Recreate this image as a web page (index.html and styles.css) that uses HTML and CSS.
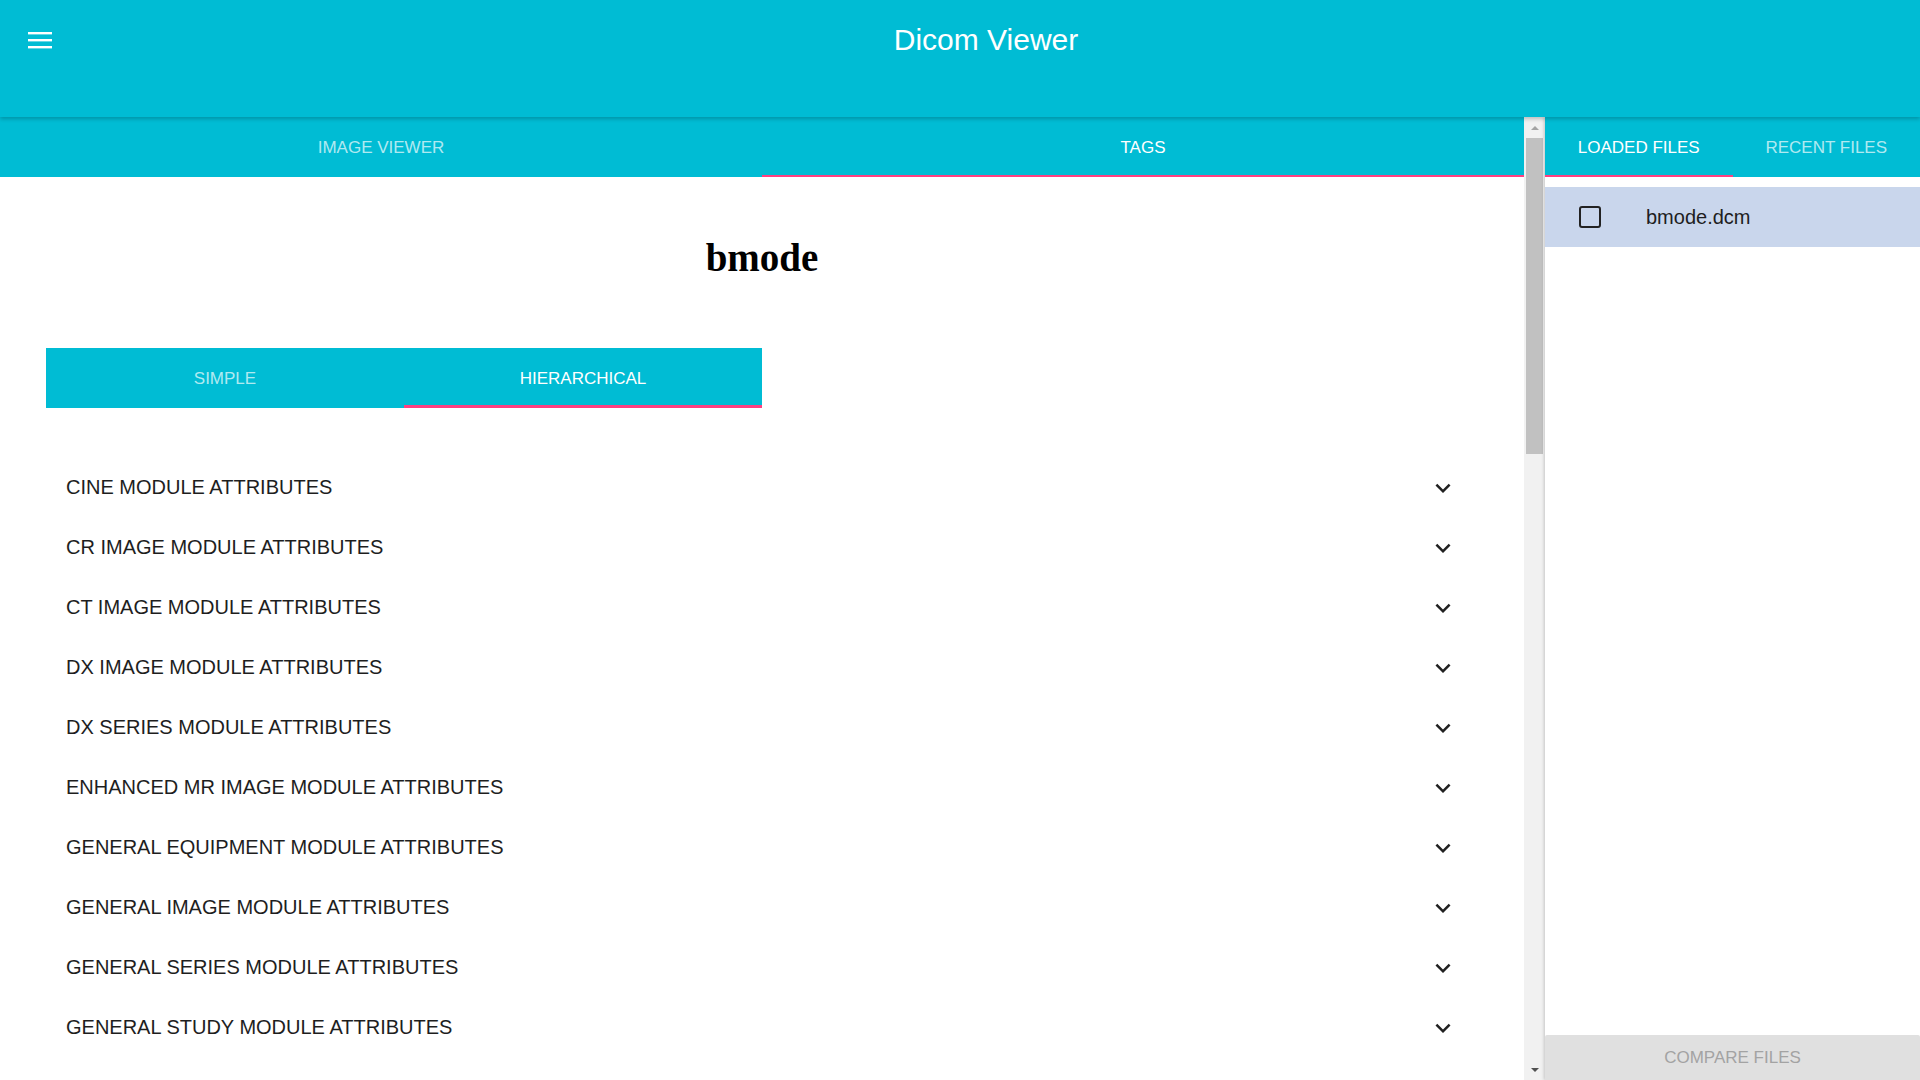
FILE: index.html
```html
<!DOCTYPE html>
<html lang="en">
<head>
<meta charset="utf-8">
<title>Dicom Viewer</title>
<link rel="stylesheet" href="styles.css">
</head>
<body>
<header class="appbar">
  <div class="toolbar">
    <button class="menu-btn" aria-label="menu">
      <svg width="24" height="17" viewBox="0 0 24 17"><rect x="0" y="0" width="24" height="2.4" fill="#fff"/><rect x="0" y="7" width="24" height="2.4" fill="#fff"/><rect x="0" y="14" width="24" height="2.4" fill="#fff"/></svg>
    </button>
    <h1 class="app-title">Dicom Viewer</h1>
  </div>
</header>

<div class="layout">
  <main class="main">
    <nav class="tabs">
      <div class="tab">IMAGE VIEWER</div>
      <div class="tab active">TAGS</div>
    </nav>
    <h2 class="file-title">bmode</h2>
    <nav class="subtabs">
      <div class="tab">SIMPLE</div>
      <div class="tab active">HIERARCHICAL</div>
    </nav>
    <ul class="modules">
      <li class="module"><span>CINE MODULE ATTRIBUTES</span><svg class="chev" viewBox="0 0 24 24"><path d="M16.59 8.59L12 13.17 7.41 8.59 6 10l6 6 6-6z"/></svg></li>
      <li class="module"><span>CR IMAGE MODULE ATTRIBUTES</span><svg class="chev" viewBox="0 0 24 24"><path d="M16.59 8.59L12 13.17 7.41 8.59 6 10l6 6 6-6z"/></svg></li>
      <li class="module"><span>CT IMAGE MODULE ATTRIBUTES</span><svg class="chev" viewBox="0 0 24 24"><path d="M16.59 8.59L12 13.17 7.41 8.59 6 10l6 6 6-6z"/></svg></li>
      <li class="module"><span>DX IMAGE MODULE ATTRIBUTES</span><svg class="chev" viewBox="0 0 24 24"><path d="M16.59 8.59L12 13.17 7.41 8.59 6 10l6 6 6-6z"/></svg></li>
      <li class="module"><span>DX SERIES MODULE ATTRIBUTES</span><svg class="chev" viewBox="0 0 24 24"><path d="M16.59 8.59L12 13.17 7.41 8.59 6 10l6 6 6-6z"/></svg></li>
      <li class="module"><span>ENHANCED MR IMAGE MODULE ATTRIBUTES</span><svg class="chev" viewBox="0 0 24 24"><path d="M16.59 8.59L12 13.17 7.41 8.59 6 10l6 6 6-6z"/></svg></li>
      <li class="module"><span>GENERAL EQUIPMENT MODULE ATTRIBUTES</span><svg class="chev" viewBox="0 0 24 24"><path d="M16.59 8.59L12 13.17 7.41 8.59 6 10l6 6 6-6z"/></svg></li>
      <li class="module"><span>GENERAL IMAGE MODULE ATTRIBUTES</span><svg class="chev" viewBox="0 0 24 24"><path d="M16.59 8.59L12 13.17 7.41 8.59 6 10l6 6 6-6z"/></svg></li>
      <li class="module"><span>GENERAL SERIES MODULE ATTRIBUTES</span><svg class="chev" viewBox="0 0 24 24"><path d="M16.59 8.59L12 13.17 7.41 8.59 6 10l6 6 6-6z"/></svg></li>
      <li class="module"><span>GENERAL STUDY MODULE ATTRIBUTES</span><svg class="chev" viewBox="0 0 24 24"><path d="M16.59 8.59L12 13.17 7.41 8.59 6 10l6 6 6-6z"/></svg></li>
    </ul>
  </main>

  <div class="scrollbar" aria-hidden="true">
    <div class="sb-btn"><span class="arrow-up"></span></div>
    <div class="sb-thumb"></div>
    <div class="sb-track"></div>
    <div class="sb-btn"><span class="arrow-down"></span></div>
  </div>

  <aside class="side">
    <nav class="tabs side-tabs">
      <div class="tab active">LOADED FILES</div>
      <div class="tab">RECENT FILES</div>
    </nav>
    <div class="files">
      <div class="file-row">
        <span class="checkbox"></span>
        <span class="file-name">bmode.dcm</span>
      </div>
    </div>
    <button class="compare">COMPARE FILES</button>
  </aside>
</div>
</body>
</html>
```

FILE: styles.css
```css
* { box-sizing: border-box; }

html, body {
  margin: 0;
  padding: 0;
  width: 1920px;
  height: 1080px;
  overflow: hidden;
  font-family: "Liberation Sans", Arial, sans-serif;
  background: #fff;
}

.appbar {
  position: relative;
  z-index: 2;
  height: 117px;
  background: #00bcd4;
  box-shadow: 0 2px 4px rgba(0, 0, 0, 0.22);
}

.toolbar {
  display: flex;
  align-items: center;
  height: 80px;
}

.menu-btn {
  margin: 0 0 0 28px;
  padding: 0;
  border: 0;
  background: none;
  width: 24px;
  height: 17px;
  display: flex;
}

.app-title {
  flex: 1;
  margin: 0;
  text-align: center;
  color: #fff;
  font-size: 30px;
  line-height: 34px;
  font-weight: normal;
  padding-bottom: 1px;
}

.layout {
  display: flex;
  height: 963px;
}

.main {
  width: 1524px;
  height: 963px;
  overflow: hidden;
}

.tabs {
  display: flex;
  height: 60px;
  background: #00bcd4;
}

.tab {
  flex: 1;
  display: flex;
  align-items: center;
  justify-content: center;
  font-size: 17px;
  color: rgba(255, 255, 255, 0.7);
  border-bottom: 2px solid transparent;
  padding-top: 3px;
}

.tab.active {
  color: #fff;
  border-bottom-color: #ff4081;
}

.file-title {
  margin: 58px 0 0;
  text-align: center;
  font-family: "Liberation Serif", "Times New Roman", serif;
  font-weight: bold;
  font-size: 39px;
  line-height: 45px;
  color: #000;
}

.subtabs {
  display: flex;
  width: 716px;
  height: 60px;
  margin: 68px 0 0 46px;
  background: #00bcd4;
}

.subtabs .tab {
  border-bottom-width: 3px;
  padding-top: 4px;
}

.modules {
  list-style: none;
  margin: 49px 46px 0;
  padding: 0;
}

.module {
  display: flex;
  align-items: center;
  justify-content: space-between;
  height: 60px;
  padding: 1px 20px 0;
  font-size: 20px;
  color: #1e1e1e;
}

.chev {
  width: 30px;
  height: 30px;
  fill: #212121;
  margin-top: 1px;
}

.scrollbar {
  width: 21px;
  height: 963px;
  display: flex;
  flex-direction: column;
  background: #f1f1f1;
  padding: 0 2px;
}

.sb-btn {
  height: 21px;
  display: flex;
  align-items: center;
  justify-content: center;
}

.arrow-up {
  width: 0;
  height: 0;
  border-left: 4px solid transparent;
  border-right: 4px solid transparent;
  border-bottom: 4px solid #a3a3a3;
}

.arrow-down {
  width: 0;
  height: 0;
  border-left: 4px solid transparent;
  border-right: 4px solid transparent;
  border-top: 4px solid #505050;
}

.sb-thumb {
  height: 316px;
  background: #c1c1c1;
}

.sb-track {
  flex: 1;
}

.side {
  position: relative;
  z-index: 1;
  width: 375px;
  height: 963px;
  display: flex;
  flex-direction: column;
  background: #fff;
  box-shadow: -1px 0 3px rgba(0, 0, 0, 0.18);
}

.files {
  flex: 1;
  padding-top: 10px;
}

.file-row {
  display: flex;
  align-items: center;
  height: 60px;
  padding-left: 34px;
  background: #c9d6ec;
}

.checkbox {
  width: 22px;
  height: 22px;
  border: 2.5px solid #222;
  border-radius: 3px;
}

.file-name {
  margin-left: 45px;
  font-size: 20px;
  color: #1e1e1e;
}

.compare {
  height: 45px;
  border: 0;
  margin: 0;
  padding: 0;
  background: #e0e0e0;
  color: #a3a3a3;
  font-family: "Liberation Sans", Arial, sans-serif;
  font-size: 17px;
  border-radius: 2px 2px 0 0;
}
```
